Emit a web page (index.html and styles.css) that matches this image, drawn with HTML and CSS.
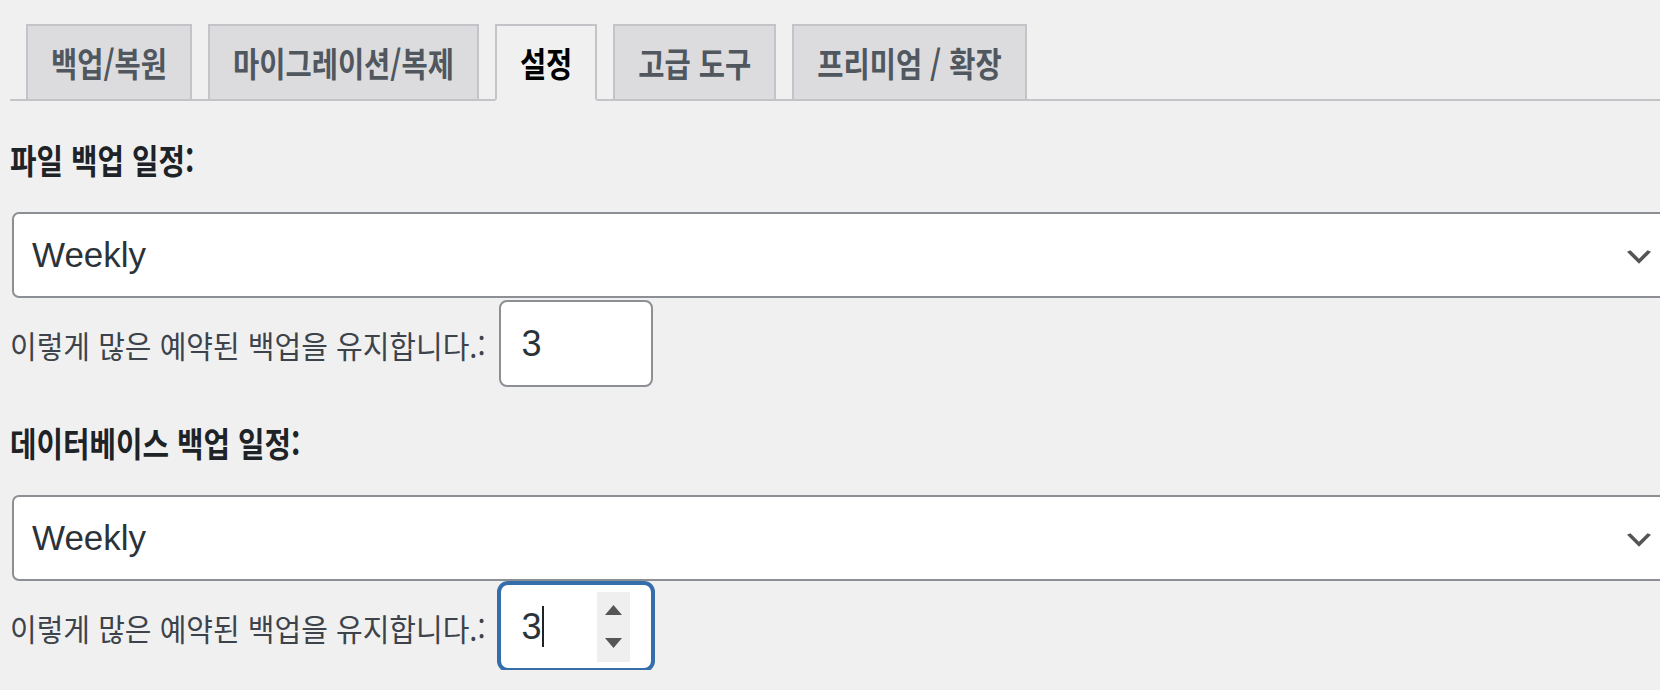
FILE: index.html
```html
<!DOCTYPE html>
<html lang="ko">
<head>
<meta charset="utf-8">
<title>설정</title>
<link rel="stylesheet" href="styles.css">
</head>
<body>
<div class="page">
  <nav class="tabs">
    <a class="tab"><span class="tx">백업/복원</span></a>
    <a class="tab"><span class="tx">마이그레이션/복제</span></a>
    <a class="tab active"><span class="tx">설정</span></a>
    <a class="tab"><span class="tx">고급 도구</span></a>
    <a class="tab"><span class="tx">프리미엄 / 확장</span></a>
  </nav>

  <section class="field">
    <h2 class="field-title"><span class="tx">파일 백업 일정:</span></h2>
    <div class="select">
      <span class="value">Weekly</span>
      <svg class="chev" viewBox="3 6 14 8" width="24" height="14" aria-hidden="true"><path d="M5 6l5 5 5-5 2 1-7 7-7-7 2-1z"/></svg>
    </div>
    <div class="keep">
      <label class="keep-label"><span class="tx">이렇게 많은 예약된 백업을 유지합니다.:</span></label>
      <div class="num"><span class="value">3</span></div>
    </div>
  </section>

  <section class="field second">
    <h2 class="field-title"><span class="tx">데이터베이스 백업 일정:</span></h2>
    <div class="select">
      <span class="value">Weekly</span>
      <svg class="chev" viewBox="3 6 14 8" width="24" height="14" aria-hidden="true"><path d="M5 6l5 5 5-5 2 1-7 7-7-7 2-1z"/></svg>
    </div>
    <div class="keep">
      <label class="keep-label"><span class="tx">이렇게 많은 예약된 백업을 유지합니다.:</span></label>
      <div class="num focus">
        <span class="value">3</span><span class="caret"></span>
        <div class="spin">
          <svg viewBox="0 0 17 10" width="17" height="10" aria-hidden="true"><path d="M8.5 0L17 10H0z"/></svg>
          <svg viewBox="0 0 17 10" width="17" height="10" aria-hidden="true"><path d="M0 0H17L8.5 10z"/></svg>
        </div>
      </div>
    </div>
  </section>
</div>
</body>
</html>
```

FILE: styles.css
```css
html, body {
  margin: 0;
  padding: 0;
  background: #f0f0f1;
  overflow: hidden;
}

body {
  font-family: "Noto Sans CJK KR", sans-serif;
  color: #3c434a;
}

.page {
  padding-left: 10px;
}

.tx {
  display: inline-block;
}

/* ---------- tabs ---------- */
.tabs {
  display: flex;
  align-items: flex-end;
  padding-top: 24px;
  border-bottom: 2px solid #c3c4c7;
}

.tab {
  margin-left: 16px;
  margin-bottom: -2px;
  padding: 11px 23px;
  border: 2px solid #c3c4c7;
  background: #dcdcde;
  color: #50575e;
  font-size: 28.5px;
  line-height: 51px;
  font-weight: 700;
  white-space: nowrap;
}

.tab .tx {
  transform: scaleY(1.19);
}

.tab.active {
  background: #f0f0f1;
  border-bottom-color: #f0f0f1;
  color: #000;
}

/* ---------- fields ---------- */
.field-title {
  margin: 39px 0 0;
  font-size: 28.8px;
  line-height: 40px;
  font-weight: 700;
  color: #1d2327;
}

.field-title .tx {
  transform: scaleY(1.2);
}

.second .field-title {
  margin-top: 36px;
}

.select {
  margin: 32px 0 0 2px;
  width: 1655px;
  height: 86px;
  box-sizing: border-box;
  border: 2px solid #8c8f94;
  border-radius: 7px;
  background: #fff;
  display: flex;
  align-items: center;
  justify-content: space-between;
  padding: 0 14px 0 18px;
  font-family: "Liberation Sans", Arial, sans-serif;
  font-size: 35px;
  color: #2c3338;
}

.chev {
  fill: #555;
  margin-top: 4px;
}

.keep {
  display: flex;
  align-items: center;
  gap: 13px;
  margin-top: 2px;
}

.keep-label {
  font-size: 29px;
  line-height: 40px;
  color: #3c434a;
  white-space: nowrap;
}

.keep-label .tx {
  transform: scaleY(1.05);
}

.num {
  width: 154px;
  height: 87px;
  box-sizing: border-box;
  border: 2px solid #8c8f94;
  border-radius: 8px;
  background: #fff;
  display: flex;
  align-items: center;
  padding-left: 21px;
  font-family: "Liberation Sans", Arial, sans-serif;
  font-size: 36px;
  color: #2c3338;
}

.num.focus {
  border-color: #356eab;
  border-radius: 9px;
  box-shadow: 0 0 0 2px #356eab;
}

.caret {
  width: 2px;
  height: 41px;
  background: #1d2327;
}

.spin {
  margin-left: auto;
  margin-right: 21px;
  width: 33px;
  height: 70px;
  box-sizing: border-box;
  padding: 13px 0 14px;
  background: #efefef;
  display: flex;
  flex-direction: column;
  justify-content: space-between;
  align-items: center;
}

.spin svg {
  fill: #555;
}
```
